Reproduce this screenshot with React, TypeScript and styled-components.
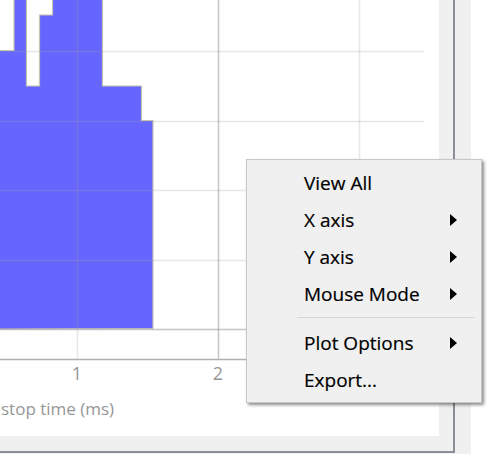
import React from "react";
import styled, { createGlobalStyle } from "styled-components";

const GlobalStyle = createGlobalStyle`
  html, body { margin: 0; padding: 0; background: #ffffff; overflow: hidden; }
  #root { width: 487px; height: 454px; }
`;

const Page = styled.div`
  position: relative;
  width: 487px;
  height: 454px;
  display: flex;
  align-items: flex-start;
  font-family: "Open Sans", "Noto Sans", sans-serif;
`;

const Window = styled.div`
  width: 471px;
  height: 454px;
  background: #f0f0f0;
  display: flex;
  align-items: flex-start;
`;

const Frame = styled.div`
  padding: 0 14px 15px 0;
  border-right: 2px solid #8a8e96;
  border-bottom: 2px solid #8a8e96;
`;

const PlotWidget = styled.div`
  width: 439px;
  height: 436px;
  background: #ffffff;
  display: flex;
  flex-direction: column;
`;

const ChartSvg = styled.svg`
  display: block;
  width: 439px;
  height: 436px;
  font-family: "Open Sans", "Noto Sans", sans-serif;
`;

const Menu = styled.div`
  position: absolute;
  left: 246px;
  top: 159px;
  width: 234px;
  padding: 4px 0;
  background: #f0f0f0;
  border: 1px solid #c8c8c8;
  box-shadow: 2px 2px 3px rgba(0, 0, 0, 0.45);
  display: flex;
  flex-direction: column;
`;

const Item = styled.div`
  height: 37px;
  display: flex;
  align-items: center;
  justify-content: space-between;
  padding: 0 24px 0 57px;
  font-size: 19px;
  color: #000000;
  white-space: nowrap;
  -webkit-text-stroke: 0.2px #000;
`;

const Separator = styled.div`
  height: 1px;
  margin: 5px 6px 6px 50px;
  background: #d6d6d6;
`;

const Arrow = () => (
  <svg width="7" height="12" viewBox="0 0 7 12">
    <polygon points="0,0 7,6 0,12" fill="#000" />
  </svg>
);

const hGrid = [51, 121, 190, 260];
const vGridMinor = [77, 359];

export default function App() {
  return (
    <>
      <GlobalStyle />
      <Page>
        <Window>
          <Frame>
            <PlotWidget>
              <ChartSvg viewBox="0 0 439 436">
                <path
                  d="M -2 329 L -2 50.5 L 14 50.5 L 14 -5 L 26.5 -5 L 26.5 86 L 39.5 86 L 39.5 15 L 52.5 15 L 52.5 -5 L 102.5 -5 L 102.5 86 L 141.5 86 L 141.5 120.5 L 153 120.5 L 153 328.5 Z"
                  fill="#6666ff"
                  stroke="#c6c2b4"
                  strokeWidth="1.2"
                />
                {hGrid.map((y) => (
                  <line key={y} x1="0" x2="424" y1={y + 0.5} y2={y + 0.5} stroke="rgba(160,160,160,0.25)" strokeWidth="1.5" />
                ))}
                <line x1="0" x2="424" y1="329.5" y2="329.5" stroke="rgba(150,150,150,0.55)" strokeWidth="1.5" />
                {vGridMinor.map((x) => (
                  <line key={x} x1={x + 0.5} x2={x + 0.5} y1="0" y2="359" stroke="rgba(160,160,160,0.25)" strokeWidth="1.5" />
                ))}
                <line x1="218.5" x2="218.5" y1="0" y2="359" stroke="rgba(150,150,150,0.55)" strokeWidth="1.5" />
                <line x1="0" x2="424" y1="359.5" y2="359.5" stroke="#b0b0b0" strokeWidth="1.5" />
                <g fill="#969696" fontSize="18">
                  <text x="77" y="380" textAnchor="middle">1</text>
                  <text x="218" y="380" textAnchor="middle">2</text>
                </g>
                <text x="1" y="415" fill="#969696" fontSize="17">stop time (ms)</text>
              </ChartSvg>
            </PlotWidget>
          </Frame>
        </Window>
        <Menu>
          <Item>View All</Item>
          <Item>X axis<Arrow /></Item>
          <Item>Y axis<Arrow /></Item>
          <Item>Mouse Mode<Arrow /></Item>
          <Separator />
          <Item>Plot Options<Arrow /></Item>
          <Item>Export...</Item>
        </Menu>
      </Page>
    </>
  );
}
